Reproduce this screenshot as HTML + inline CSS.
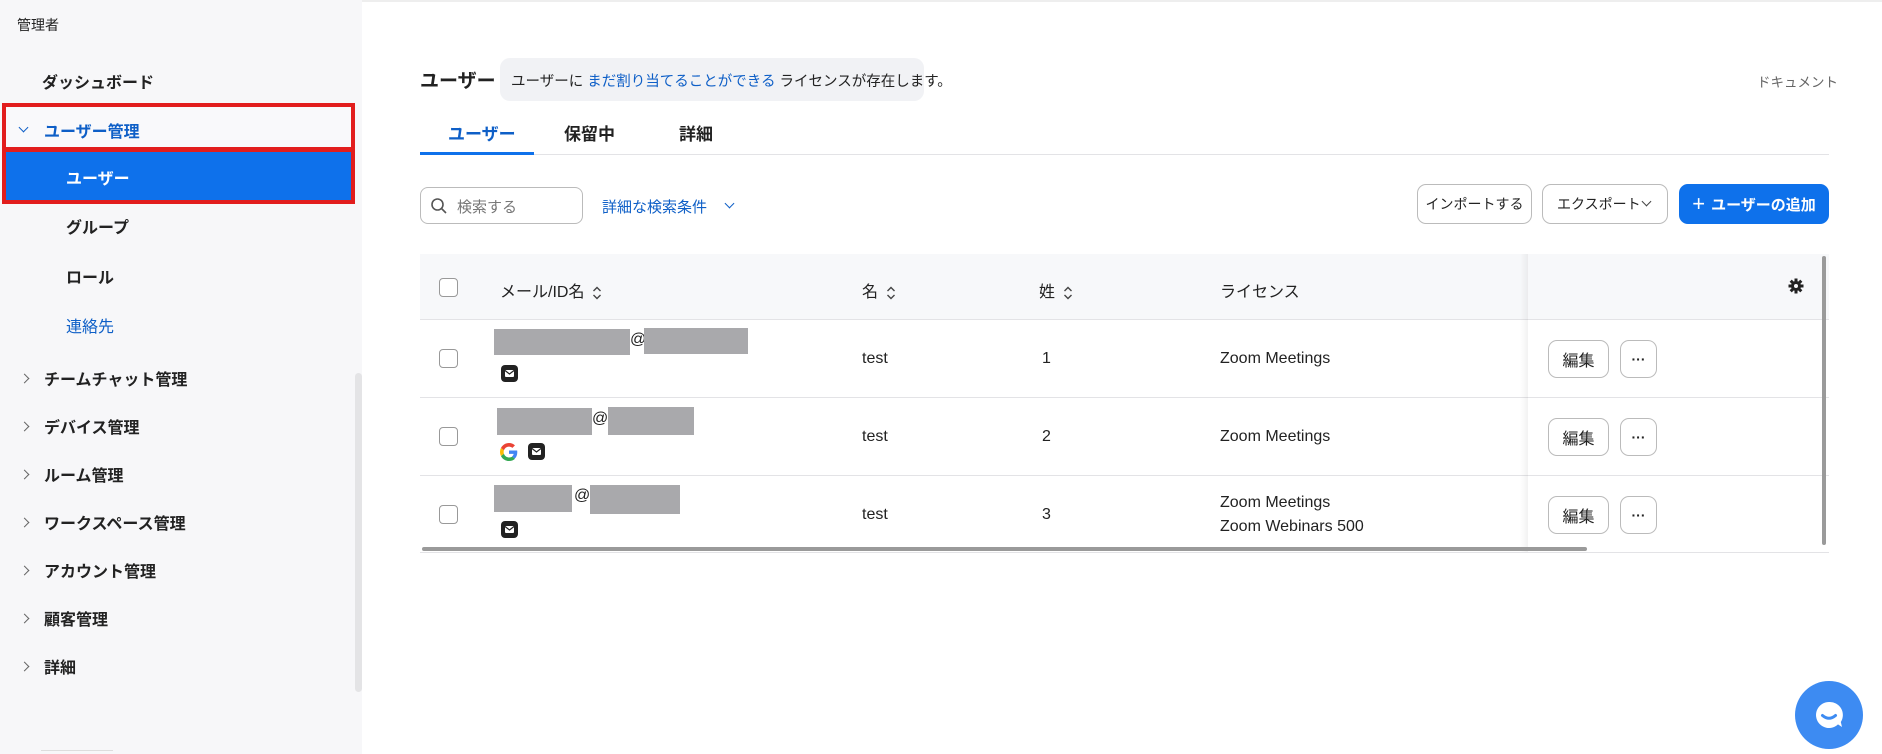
<!DOCTYPE html>
<html><head><meta charset="utf-8"><style>
*{box-sizing:border-box;margin:0;padding:0}
body{width:1882px;height:754px;overflow:hidden;background:#fff;font-family:"Liberation Sans","Noto Sans CJK JP",sans-serif;color:#222;position:relative}
.a{position:absolute;white-space:nowrap}
.sb{position:absolute;left:0;top:0;width:362px;height:754px;background:#f7f7f9}
.nav{font-size:16px;font-weight:bold;color:#222}
.chev{position:absolute;width:7px;height:7px;border-right:1.5px solid #666;border-top:1.5px solid #666;transform:rotate(45deg)}
.btn{position:absolute;border:1px solid #bbb;border-radius:9px;background:#fff;font-size:14px;display:flex;align-items:center;justify-content:center;color:#222}
.cb{position:absolute;width:19px;height:19px;border:1.5px solid #999;border-radius:4px;background:#fff}
.g{position:absolute;background:#a9a9ac}
.mail{position:absolute;width:17px;height:17px}
.line{position:absolute;left:420px;width:1409px;height:1px;background:#e3e3e6}
.t{font-size:16px}
.srt{display:inline-block;vertical-align:middle;margin-left:8px}
</style></head><body>
<div class="a" style="left:0;top:0;width:1882px;height:2px;background:#eee"></div>
<div class="sb"></div>
<div class="a" style="left:17px;top:15px;font-size:14px">管理者</div>
<div class="a nav" style="left:42px;top:69px">ダッシュボード</div>
<div class="a" style="left:2px;top:103px;width:353px;height:101px;background:#e21d1d"></div>
<div class="a" style="left:6px;top:107px;width:345px;height:40px;background:#f9f9fb"></div>
<div class="a" style="left:6px;top:152px;width:345px;height:48px;background:#0e71eb"></div>
<div class="chev" style="left:20px;top:124px;transform:rotate(135deg);border-color:#0e5fc7"></div>
<div class="a nav" style="left:44px;top:118px;color:#0e5fc7">ユーザー管理</div>
<div class="a nav" style="left:66px;top:165px;color:#fff">ユーザー</div>
<div class="a nav" style="left:66px;top:214px">グループ</div>
<div class="a nav" style="left:66px;top:264px">ロール</div>
<div class="a" style="left:66px;top:313px;font-size:16px;color:#0e5fc7">連絡先</div>
<div class="chev" style="left:21px;top:375px"></div><div class="a nav" style="left:44px;top:366px">チームチャット管理</div>
<div class="chev" style="left:21px;top:423px"></div><div class="a nav" style="left:44px;top:414px">デバイス管理</div>
<div class="chev" style="left:21px;top:471px"></div><div class="a nav" style="left:44px;top:462px">ルーム管理</div>
<div class="chev" style="left:21px;top:519px"></div><div class="a nav" style="left:44px;top:510px">ワークスペース管理</div>
<div class="chev" style="left:21px;top:567px"></div><div class="a nav" style="left:44px;top:558px">アカウント管理</div>
<div class="chev" style="left:21px;top:615px"></div><div class="a nav" style="left:44px;top:606px">顧客管理</div>
<div class="chev" style="left:21px;top:663px"></div><div class="a nav" style="left:44px;top:654px">詳細</div>
<div class="a" style="left:355px;top:373px;width:7px;height:319px;background:#e4e4e6;border-radius:4px"></div>
<div class="a" style="left:41px;top:750px;width:72px;height:1px;background:#ddd"></div>

<div class="a" style="left:420px;top:66px;font-size:19px;font-weight:bold">ユーザー</div>
<div class="a" style="left:500px;top:58px;width:424px;height:43px;background:#f1f2f5;border-radius:10px;font-size:14.5px;padding:12px 0 0 11px">ユーザーに <span style="color:#0e5fc7">まだ割り当てることができる</span> ライセンスが存在します。</div>
<div class="a" style="left:1757px;top:71px;font-size:13.5px;color:#666">ドキュメント</div>
<div class="a" style="left:448px;top:120px;font-size:17px;font-weight:bold;color:#0e5fc7">ユーザー</div>
<div class="a" style="left:564px;top:120px;font-size:17px;font-weight:bold">保留中</div>
<div class="a" style="left:679px;top:120px;font-size:17px;font-weight:bold">詳細</div>
<div class="line" style="top:154px"></div>
<div class="a" style="left:420px;top:152px;width:114px;height:3px;background:#0e71eb"></div>

<div class="a" style="left:420px;top:187px;width:163px;height:37px;border:1px solid #bbb;border-radius:8px;font-size:15px;color:#777;padding:8px 0 0 36px">検索する</div>
<svg class="a" style="left:430px;top:197px" width="18" height="18" viewBox="0 0 18 18"><circle cx="7.5" cy="7.5" r="5.5" fill="none" stroke="#555" stroke-width="1.6"/><path d="M11.5 11.5L16 16" stroke="#555" stroke-width="1.6"/></svg>
<div class="a" style="left:602px;top:196px;font-size:15px;color:#0e5fc7">詳細な検索条件</div>
<div class="chev" style="left:726px;top:200px;transform:rotate(135deg);border-color:#0e5fc7"></div>

<div class="btn" style="left:1417px;top:184px;width:115px;height:40px">インポートする</div>
<div class="btn" style="left:1542px;top:184px;width:126px;height:40px;justify-content:flex-start;padding-left:14px">エクスポート</div>
<div class="chev" style="left:1643px;top:198px;transform:rotate(135deg);border-color:#444"></div>
<div class="btn" style="left:1679px;top:184px;width:150px;height:40px;background:#0e71eb;border-color:#0e71eb;color:#fff;font-weight:bold;font-size:15px"><span style="font-size:22px;font-weight:normal;margin-right:6px">+</span>ユーザーの追加</div>

<div class="a" style="left:420px;top:254px;width:1409px;height:65px;background:#f7f8fa"></div>
<div class="line" style="top:319px"></div><div class="line" style="top:397px"></div><div class="line" style="top:475px"></div><div class="line" style="top:552px"></div>
<div class="cb" style="left:439px;top:278px"></div>
<div class="a t" style="left:500px;top:278px">メール/ID名<svg class="srt" width="10" height="14" viewBox="0 0 10 14"><path d="M1.5 5L5 1.5 8.5 5M1.5 9L5 12.5 8.5 9" fill="none" stroke="#444" stroke-width="1.4"/></svg></div>
<div class="a t" style="left:862px;top:278px">名<svg class="srt" width="10" height="14" viewBox="0 0 10 14"><path d="M1.5 5L5 1.5 8.5 5M1.5 9L5 12.5 8.5 9" fill="none" stroke="#444" stroke-width="1.4"/></svg></div>
<div class="a t" style="left:1039px;top:278px">姓<svg class="srt" width="10" height="14" viewBox="0 0 10 14"><path d="M1.5 5L5 1.5 8.5 5M1.5 9L5 12.5 8.5 9" fill="none" stroke="#444" stroke-width="1.4"/></svg></div>
<div class="a t" style="left:1220px;top:278px">ライセンス</div>
<div class="a" style="left:1520px;top:254px;width:8px;height:298px;background:linear-gradient(to right,rgba(0,0,0,0),rgba(0,0,0,0.05))"></div>
<svg class="a" style="left:1788px;top:278px" width="16" height="16" viewBox="0 0 16 16"><g fill="#222"><circle cx="8" cy="8" r="5"/><rect x="6.5" y="0.5" width="3" height="15"/><rect x="0.5" y="6.5" width="15" height="3"/><rect x="6.5" y="0.5" width="3" height="15" transform="rotate(45 8 8)"/><rect x="6.5" y="0.5" width="3" height="15" transform="rotate(-45 8 8)"/></g><circle cx="8" cy="8" r="2" fill="#f7f8fa"/></svg>

<!-- row1 -->
<div class="cb" style="left:439px;top:349px"></div>
<div class="g" style="left:494px;top:329px;width:136px;height:26px"></div><div class="a t" style="left:630px;top:331px">@</div><div class="g" style="left:644px;top:328px;width:104px;height:26px"></div>
<svg class="mail" style="left:501px;top:365px" viewBox="0 0 17 17"><rect width="17" height="17" rx="4" fill="#222"/><rect x="4" y="5" width="9" height="7" rx="1" fill="#fff"/><path d="M4 5.5l4.5 3.5 4.5-3.5" fill="none" stroke="#222" stroke-width="1.2"/></svg>
<div class="a t" style="left:862px;top:350px">test</div><div class="a t" style="left:1042px;top:350px">1</div><div class="a t" style="left:1220px;top:350px">Zoom Meetings</div>
<div class="btn" style="left:1548px;top:340px;width:61px;height:38px;font-size:16px">編集</div><div class="btn" style="left:1620px;top:340px;width:37px;height:38px;font-weight:bold">···</div>
<!-- row2 -->
<div class="cb" style="left:439px;top:427px"></div>
<div class="g" style="left:497px;top:408px;width:95px;height:27px"></div><div class="a t" style="left:592px;top:410px">@</div><div class="g" style="left:608px;top:407px;width:86px;height:28px"></div>
<svg class="a" style="left:500px;top:443px" width="18" height="18" viewBox="0 0 48 48"><path fill="#EA4335" d="M24 9.5c3.5 0 6.6 1.2 9.1 3.6l6.8-6.8C35.8 2.4 30.4 0 24 0 14.6 0 6.6 5.4 2.6 13.3l7.9 6.1C12.4 13.7 17.7 9.5 24 9.5z"/><path fill="#4285F4" d="M46.1 24.5c0-1.6-.1-3.1-.4-4.5H24v9h12.4c-.5 2.9-2.2 5.3-4.6 7l7.4 5.8c4.3-4 6.9-9.900 6.9-17.3z"/><path fill="#FBBC05" d="M10.5 28.6c-.5-1.4-.8-3-.8-4.6s.3-3.2.8-4.6l-7.9-6.1C.9 16.5 0 20.1 0 24s.9 7.5 2.6 10.7l7.9-6.1z"/><path fill="#34A853" d="M24 48c6.5 0 11.9-2.1 15.9-5.8l-7.4-5.8c-2.1 1.4-4.8 2.3-8.5 2.3-6.3 0-11.6-4.2-13.5-9.9l-7.9 6.1C6.6 42.6 14.6 48 24 48z"/></svg>
<svg class="mail" style="left:528px;top:443px" viewBox="0 0 17 17"><rect width="17" height="17" rx="4" fill="#222"/><rect x="4" y="5" width="9" height="7" rx="1" fill="#fff"/><path d="M4 5.5l4.5 3.5 4.5-3.5" fill="none" stroke="#222" stroke-width="1.2"/></svg>
<div class="a t" style="left:862px;top:428px">test</div><div class="a t" style="left:1042px;top:428px">2</div><div class="a t" style="left:1220px;top:428px">Zoom Meetings</div>
<div class="btn" style="left:1548px;top:418px;width:61px;height:38px;font-size:16px">編集</div><div class="btn" style="left:1620px;top:418px;width:37px;height:38px;font-weight:bold">···</div>
<!-- row3 -->
<div class="cb" style="left:439px;top:505px"></div>
<div class="g" style="left:494px;top:485px;width:78px;height:27px"></div><div class="a t" style="left:574px;top:487px">@</div><div class="g" style="left:590px;top:485px;width:90px;height:29px"></div>
<svg class="mail" style="left:501px;top:521px" viewBox="0 0 17 17"><rect width="17" height="17" rx="4" fill="#222"/><rect x="4" y="5" width="9" height="7" rx="1" fill="#fff"/><path d="M4 5.5l4.5 3.5 4.5-3.5" fill="none" stroke="#222" stroke-width="1.2"/></svg>
<div class="a t" style="left:862px;top:506px">test</div><div class="a t" style="left:1042px;top:506px">3</div>
<div class="a t" style="left:1220px;top:494px">Zoom Meetings</div><div class="a t" style="left:1220px;top:518px">Zoom Webinars 500</div>
<div class="btn" style="left:1548px;top:496px;width:61px;height:38px;font-size:16px">編集</div><div class="btn" style="left:1620px;top:496px;width:37px;height:38px;font-weight:bold">···</div>

<div class="a" style="left:422px;top:547px;width:1165px;height:4px;background:#9a9a9a;border-radius:2px"></div>
<div class="a" style="left:1822px;top:256px;width:4px;height:289px;background:#9a9a9a;border-radius:2px"></div>

<div class="a" style="left:1795px;top:681px;width:68px;height:68px;border-radius:50%;background:#3d8bf2"></div>
<svg class="a" style="left:1810px;top:696px" width="38" height="38" viewBox="0 0 38 38"><path d="M19 6a13 13 0 1 0 9 22.4l4 2.6-1.2-5A13 13 0 0 0 19 6z" fill="#fff"/><path d="M12.5 19.5q6.5 5.5 13 0" stroke="#3d8bf2" stroke-width="3" fill="none" stroke-linecap="round"/></svg>
</body></html>
